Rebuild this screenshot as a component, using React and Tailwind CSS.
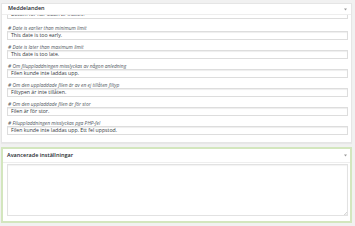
import React from 'react';

const fields = [
  { label: '# Date is earlier than minimum limit', value: 'This date is too early.' },
  { label: '# Date is later than maximum limit', value: 'This date is too late.' },
  { label: '# Om filuppladdningen misslyckas av någon anledning', value: 'Filen kunde inte laddas upp.' },
  { label: '# Om den uppladdade filen är av en ej tillåten filtyp', value: 'Filtypen är inte tillåten.' },
  { label: '# Om den uppladdade filen är för stor', value: 'Filen är för stor.' },
  { label: '# Filuppladdningen misslyckas pga PHP-fel', value: 'Filen kunde inte laddas upp. Ett fel uppstod.' },
];

function Toggle() {
  return (
    <svg width="3" height="3" viewBox="0 0 3 3" className="block">
      <path d="M0 0.5h3L1.5 2.5z" fill="#9a9a9a" />
    </svg>
  );
}

function TextInput({ value }) {
  return (
    <div className="h-[9px] border border-[#dddddd] bg-white shadow-[inset_0_1px_1px_rgba(0,0,0,0.07)] flex items-center px-[3px] text-[5.2px] leading-none text-[#32373c] whitespace-nowrap overflow-hidden">
      {value}
    </div>
  );
}

export default function App() {
  return (
    <div
      className="w-[355px] h-[226px] bg-[#f1f1f1] overflow-hidden pt-[3px] pl-[1px] pr-[3px]"
      style={{ fontFamily: '"Open Sans", "Liberation Sans", sans-serif' }}
    >
      {/* Meddelanden */}
      <div className="h-[140px] bg-white border border-[#e5e5e5] shadow-[0_1px_1px_rgba(0,0,0,0.04)] flex flex-col overflow-hidden">
        <div className="h-[11px] shrink-0 border-b border-[#eeeeee] flex items-center justify-between pl-[6px] pr-[4px]">
          <span className="text-[5.5px] font-semibold text-[#23282d] leading-none">Meddelanden</span>
          <Toggle />
        </div>
        <div className="flex-1 overflow-hidden pl-[5px] pr-[3px]">
          <div className="mt-[-5px]">
            <TextInput value="Datum för när sidan är inaktiv." />
          </div>
          <div className="mt-[6px] flex flex-col gap-[4px]">
            {fields.map((f) => (
              <div key={f.label}>
                <div className="h-[6px] leading-[6px] text-[4.9px] italic text-[#50575e] pl-[1px] whitespace-nowrap">
                  {f.label}
                </div>
                <TextInput value={f.value} />
              </div>
            ))}
          </div>
        </div>
      </div>

      {/* Avancerade inställningar */}
      <div className="mt-[4px] h-[76px] bg-white border-2 border-[#d3e6be] flex flex-col">
        <div className="h-[14px] shrink-0 border-b border-[#eeeeee] flex items-center justify-between pl-[4px] pr-[3px]">
          <span className="text-[5.5px] font-semibold text-[#23282d] leading-none">Avancerade inställningar</span>
          <Toggle />
        </div>
        <div className="flex-1 pl-[4px] pr-[2px] pt-[1px] pb-[5px]">
          <div className="relative h-full border border-[#e2e2e2] bg-white shadow-[inset_0_1px_1px_rgba(0,0,0,0.05)]">
            <svg width="3" height="3" viewBox="0 0 3 3" className="absolute right-[0px] bottom-[0px]">
              <path d="M3 0L0 3M3 1.5L1.5 3" stroke="#b0b0b0" strokeWidth="0.5" />
            </svg>
          </div>
        </div>
      </div>
    </div>
  );
}
